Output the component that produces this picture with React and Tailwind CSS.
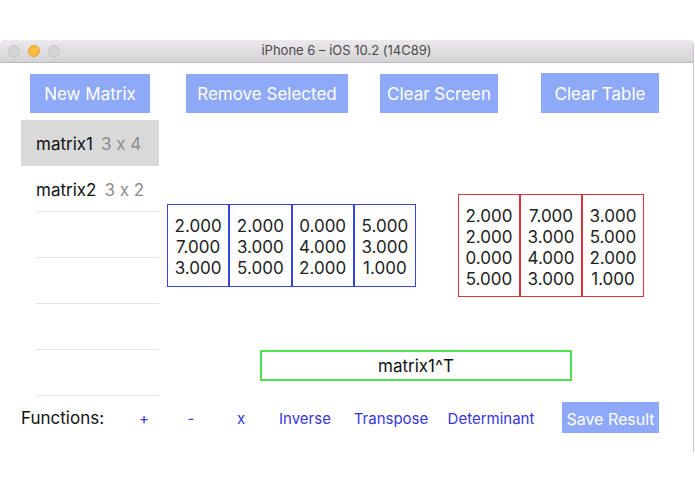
import React from "react";

// columns of the 3 x 4 matrix (blue)
const blueColumns = [
  ["2.000", "7.000", "3.000"],
  ["2.000", "3.000", "5.000"],
  ["0.000", "4.000", "2.000"],
  ["5.000", "3.000", "1.000"],
];

// columns of the transposed 4 x 3 matrix (red)
const redColumns = [
  ["2.000", "2.000", "0.000", "5.000"],
  ["7.000", "3.000", "4.000", "3.000"],
  ["3.000", "5.000", "2.000", "1.000"],
];

const matrices = [
  { name: "matrix1", size: "3 x 4", selected: true },
  { name: "matrix2", size: "3 x 2" },
  {},
  {},
  {},
  {},
];

function Button({ className = "", children }) {
  return (
    <div
      className={`flex items-center justify-center bg-[#8fa9f9] pt-[3px] text-white ${className}`}
    >
      {children}
    </div>
  );
}

function Matrix({ columns, border, height, width }) {
  return (
    <div className="flex">
      {columns.map((col, i) => (
        <div
          key={i}
          className={`flex flex-col items-center justify-center border pt-[4px] text-[17px] leading-[21px] text-[#222] ${border} ${height} ${width}`}
        >
          {col.map((v, j) => (
            <span key={j}>{v}</span>
          ))}
        </div>
      ))}
    </div>
  );
}

export default function App() {
  return (
    <div
      className="h-[494px] w-[695px] overflow-hidden bg-white pt-[40px] [font-feature-settings:'calt'_0]"
      style={{ fontFamily: "Inter, 'Noto Sans', sans-serif" }}
    >
      <div className="h-[412px] w-[694px] rounded-t-[5px] border-r border-[#c4c4c4]">
        {/* title bar */}
        <div className="relative flex h-[23px] items-center justify-center rounded-t-[5px] border-b border-[#b9b9b9] bg-gradient-to-b from-[#ebe9eb] to-[#d5d3d5]">
          <div className="absolute left-[8px] top-[5px] flex gap-[8px]">
            <span className="h-[12px] w-[12px] rounded-full border border-[#c5c5c5] bg-[#d6d6d6]" />
            <span className="h-[12px] w-[12px] rounded-full border border-[#e0a634] bg-[#fdbc40]" />
            <span className="h-[12px] w-[12px] rounded-full border border-[#c5c5c5] bg-[#d6d6d6]" />
          </div>
          <span className="text-[13px] text-[#4a4a4a]">iPhone 6 – iOS 10.2 (14C89)</span>
        </div>

        {/* top buttons */}
        <div className="flex items-start pt-[10px] text-[17px]">
          <Button className="ml-[30px] mt-[1px] h-[39px] w-[120px]">New Matrix</Button>
          <Button className="ml-[36px] mt-[1px] h-[39px] w-[162px]">Remove Selected</Button>
          <Button className="ml-[32px] mt-[1px] h-[39px] w-[118px]">Clear Screen</Button>
          <Button className="ml-[43px] h-[40px] w-[118px]">Clear Table</Button>
        </div>

        <div className="mt-[7px] flex">
          {/* matrix list */}
          <div className="ml-[21px] w-[138px]">
            {matrices.map((m, i) => (
              <div key={i}>
                <div
                  className={`flex items-center gap-[8px] pl-[15px] pt-[4px] text-[17px] ${
                    m.selected ? "h-[46px] bg-[#d9d9d9]" : "h-[45px]"
                  }`}
                >
                  <span className="text-[#111]">{m.name}</span>
                  <span className="text-[#8e8e8e]">{m.size}</span>
                </div>
                {!m.selected && <div className="ml-[15px] h-px bg-[#e3e3e3]" />}
              </div>
            ))}
          </div>

          {/* matrices and expression */}
          <div className="flex flex-col">
            <div className="flex items-start">
              <div className="ml-[8px] mt-[84px]">
                <Matrix columns={blueColumns} border="border-[#3445e0]" height="h-[83px]" width="w-[62.25px]" />
              </div>
              <div className="ml-[42px] mt-[74px]">
                <Matrix columns={redColumns} border="border-[#e0333f]" height="h-[103px]" width="w-[62px]" />
              </div>
            </div>
            <div className="ml-[101px] mt-[53px] flex h-[31px] w-[312px] items-center justify-center border-2 border-[#4ce44c] pt-[2px] text-[17px] text-[#111]">
              matrix1^T
            </div>
          </div>
        </div>

        {/* functions row */}
        <div className="mt-[6px] flex h-[31px] items-center pt-[3px] text-[15px] text-[#3636dc]">
          <span className="ml-[21px] w-[90px] text-[17px] text-[#111]">Functions:</span>
          <span className="ml-[18px] w-[30px] text-center">+</span>
          <span className="ml-[17px] w-[30px] text-center">-</span>
          <span className="ml-[20px] w-[30px] text-center">x</span>
          <span className="ml-[14px] w-[70px] text-center">Inverse</span>
          <span className="ml-[10px] w-[82px] text-center">Transpose</span>
          <span className="ml-[10px] w-[98px] text-center">Determinant</span>
          <Button className="-mt-[3px] ml-[22px] h-[31px] w-[97px] text-[16px]">Save Result</Button>
        </div>
      </div>
    </div>
  );
}
